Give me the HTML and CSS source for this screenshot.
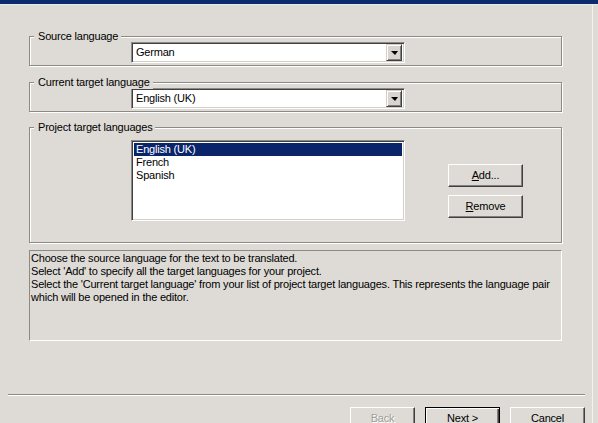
FILE: index.html
```html
<!DOCTYPE html>
<html>
<head>
<meta charset="utf-8">
<link rel="stylesheet" href="styles.css">
</head>
<body>
<div class="window">
  <div class="titlebar"></div>
  <div class="dialog">
    <div class="group g1">
      <span class="legend">Source language</span>
      <div class="combo">
        <span class="combo-text">German</span>
        <span class="combo-btn"><span class="tri"></span></span>
      </div>
    </div>
    <div class="group g2">
      <span class="legend">Current target language</span>
      <div class="combo">
        <span class="combo-text">English (UK)</span>
        <span class="combo-btn"><span class="tri"></span></span>
      </div>
    </div>
    <div class="group g3">
      <span class="legend">Project target languages</span>
      <div class="g3-row">
        <div class="listbox">
          <div class="item selected">English (UK)</div>
          <div class="item">French</div>
          <div class="item">Spanish</div>
        </div>
        <div class="btn-col">
          <div class="btn"><span><u>A</u>dd...</span></div>
          <div class="btn"><span><u>R</u>emove</span></div>
        </div>
      </div>
    </div>
    <div class="info">
      <div>Choose the source language for the text to be translated.</div>
      <div>Select 'Add' to specify all the target languages for your project.</div>
      <div>Select the 'Current target language' from your list of project target languages. This represents the language pair</div>
      <div>which will be opened in the editor.</div>
    </div>
  </div>
  <div class="separator"></div>
  <div class="footer">
    <div class="btn back disabled"><span><u>B</u>ack</span></div>
    <div class="btn next default"><span><u>N</u>ext &gt;</span></div>
    <div class="btn cancel"><span>Cancel</span></div>
  </div>
</div>
</body>
</html>
```

FILE: styles.css
```css
html, body {
  margin: 0;
  padding: 0;
  background: #dedbd6;
}
body {
  font-family: "Liberation Sans", Arial, sans-serif;
  font-size: 11px;
  letter-spacing: -0.2px;
  color: #000;
  width: 598px;
  height: 423px;
  overflow: hidden;
}
.window {
  width: 593px;
  height: 423px;
  border-right: 1px solid #f4f3f1;
  box-sizing: border-box;
}
.titlebar {
  height: 4px;
  background: #0c2a6e;
  border-bottom: 1px solid #e9e8ea;
  width: 598px;
}
.dialog {
  padding: 31px 0 0 29px;
  width: 533px;
}
.group {
  border: 1px solid #8c8a86;
  box-shadow: inset 1px 1px 0 #fff, 1px 1px 0 #fff;
  padding: 0 0 2px 0;
}
.g2 { margin-top: 16px; }
.g3 { margin-top: 15px; padding-bottom: 21px; }
.legend {
  display: block;
  width: max-content;
  margin: -7px 0 0 4px;
  padding: 0 3px 0 4px;
  line-height: 13px;
  background: #dedbd6;
  position: relative;
}
.combo {
  margin: -1px 0 0 101px;
  width: 274px;
  height: 21px;
  box-sizing: border-box;
  background: #fff;
  border-top: 1px solid #8c8a86;
  border-left: 1px solid #8c8a86;
  border-right: 1px solid #fff;
  border-bottom: 1px solid #fff;
  box-shadow: inset 1px 1px 0 #404040, inset -1px -1px 0 #d4d0c8;
  display: flex;
  align-items: center;
  padding: 2px 2px 2px 4px;
}
.combo-text {
  flex: 1;
  line-height: 13px;
}
.combo-btn {
  width: 16px;
  height: 17px;
  box-sizing: border-box;
  background: #d8d5d0;
  border-top: 1px solid #d4d0c8;
  border-left: 1px solid #d4d0c8;
  border-right: 1px solid #404040;
  border-bottom: 1px solid #404040;
  box-shadow: inset 1px 1px 0 #fff, inset -1px -1px 0 #808080;
  display: flex;
  align-items: center;
  justify-content: center;
}
.tri {
  width: 0;
  height: 0;
  border-left: 4px solid transparent;
  border-right: 3px solid transparent;
  border-top: 4px solid #000;
  margin-top: 1px;
}
.g3-row {
  display: flex;
  margin-top: 6px;
}
.listbox {
  margin-left: 101px;
  width: 274px;
  height: 81px;
  box-sizing: border-box;
  background: #fff;
  border-top: 1px solid #8c8a86;
  border-left: 1px solid #8c8a86;
  border-right: 1px solid #fff;
  border-bottom: 1px solid #fff;
  box-shadow: inset 1px 1px 0 #404040, inset -1px -1px 0 #d4d0c8;
  padding: 2px 2px;
}
.item {
  height: 13px;
  line-height: 13px;
  padding-left: 2px;
}
.item.selected {
  background: #0a246a;
  color: #fff;
}
.btn-col {
  margin: 24px 0 0 43px;
  display: flex;
  flex-direction: column;
  gap: 8px;
}
.btn {
  width: 75px;
  height: 23px;
  box-sizing: border-box;
  background: #dedbd6;
  border-top: 1px solid #fff;
  border-left: 1px solid #fff;
  border-right: 1px solid #404040;
  border-bottom: 1px solid #404040;
  box-shadow: inset -1px -1px 0 #808080;
  display: flex;
  align-items: center;
  justify-content: center;
  line-height: 13px;
}
.info {
  margin-top: 7px;
  height: 91px;
  box-sizing: border-box;
  border-top: 1px solid #8c8a86;
  border-left: 1px solid #8c8a86;
  border-right: 1px solid #fff;
  border-bottom: 1px solid #fff;
  padding: 1px 0 0 1px;
  line-height: 13px;
  white-space: nowrap;
}
.separator {
  margin: 53px 0 0 8px;
  width: 577px;
  height: 1px;
  background: #8c8a86;
  border-bottom: 1px solid #fff;
}
.footer {
  display: flex;
  margin: 11px 0 0 350px;
  gap: 10px;
}
.btn.back { width: 65px; }
.btn.disabled {
  color: #a09d98;
  text-shadow: 1px 1px 0 #fff;
}
.btn.default {
  border: 1px solid #000;
  box-shadow: inset 1px 1px 0 #fff, inset -1px -1px 0 #404040, inset -2px -2px 0 #808080;
}
```
